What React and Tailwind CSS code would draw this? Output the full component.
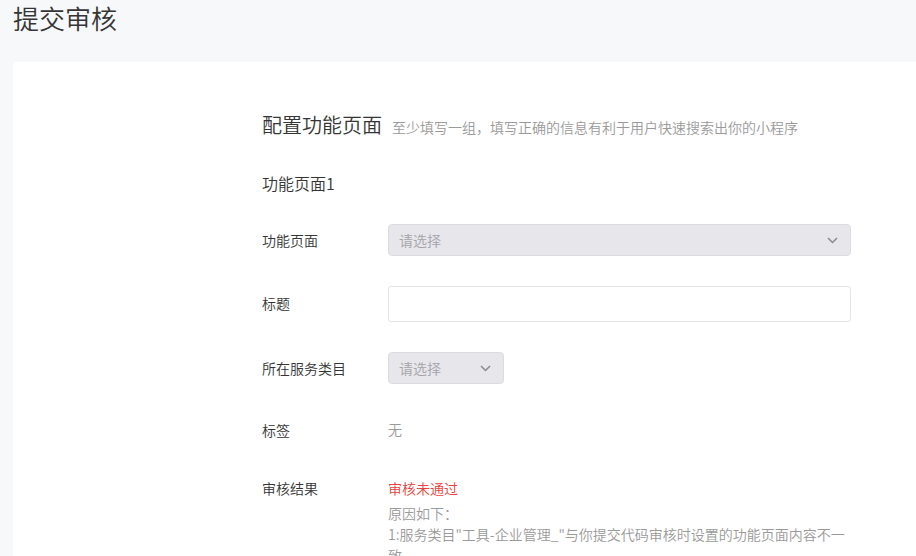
import React from "react";

const Chevron = () => (
  <svg width="11" height="7" viewBox="0 0 11 7" fill="none">
    <path d="M1 1l4.5 4.5L10 1" stroke="#8a8a8a" strokeWidth="1.5" />
  </svg>
);

export default function App() {
  return (
    <div
      className="w-[916px] h-[556px] overflow-hidden bg-[#f7f8fa] font-[350]"
      style={{ fontFamily: '"Noto Sans CJK SC", "Noto Sans", sans-serif' }}
    >
      <div className="h-[62px] pl-[13px]">
        <div className="text-[26px] leading-[36px] text-[#353535]">提交审核</div>
      </div>
      <div className="ml-[13px] bg-white rounded-tl-[4px] h-[600px] pl-[249px] pr-[65px] pt-[49px]">
        <div className="flex items-baseline h-[28px]">
          <span className="text-[20px] leading-[28px] text-[#353535]">配置功能页面</span>
          <span className="ml-[10px] text-[14px] text-[#9a9a9a]">
            至少填写一组，填写正确的信息有利于用户快速搜索出你的小程序
          </span>
        </div>
        <div className="mt-[32px] text-[16px] leading-[24px] text-[#353535]">功能页面1</div>

        <div className="mt-[29px] flex items-center h-[32px]">
          <div className="w-[126px] text-[14px] text-[#353535]">功能页面</div>
          <div className="flex-1 h-[32px] rounded-[4px] border border-[#dcdce0] bg-[#e7e7eb] flex items-center justify-between pl-[10px] pr-[12px]">
            <span className="text-[14px] text-[#a3a3a8]">请选择</span>
            <Chevron />
          </div>
        </div>

        <div className="mt-[30px] flex items-center h-[36px]">
          <div className="w-[126px] text-[14px] text-[#353535] pb-[2px]">标题</div>
          <div className="flex-1 h-[36px] rounded-[3px] border border-[#e4e4e4] bg-white" />
        </div>

        <div className="mt-[30px] flex items-center h-[32px]">
          <div className="w-[126px] text-[14px] text-[#353535]">所在服务类目</div>
          <div className="w-[116px] h-[32px] rounded-[4px] border border-[#dcdce0] bg-[#e7e7eb] flex items-center justify-between pl-[10px] pr-[12px]">
            <span className="text-[14px] text-[#a3a3a8]">请选择</span>
            <Chevron />
          </div>
        </div>

        <div className="mt-[34px] flex h-[22px] items-center">
          <div className="w-[126px] text-[14px] text-[#353535] pt-[2px]">标签</div>
          <div className="text-[14px] text-[#9a9a9a]">无</div>
        </div>

        <div className="mt-[37px] flex">
          <div className="w-[126px] text-[14px] leading-[22px] text-[#353535]">审核结果</div>
          <div className="flex-1 text-[14px] leading-[21px]">
            <div className="leading-[22px] text-[#e64340]">审核未通过</div>
            <div className="mt-[4px] text-[#9a9a9a]">原因如下：</div>
            <div className="text-[#9a9a9a]">
              1:服务类目"工具-企业管理_"与你提交代码审核时设置的功能页面内容不一致
            </div>
          </div>
        </div>
      </div>
    </div>
  );
}
